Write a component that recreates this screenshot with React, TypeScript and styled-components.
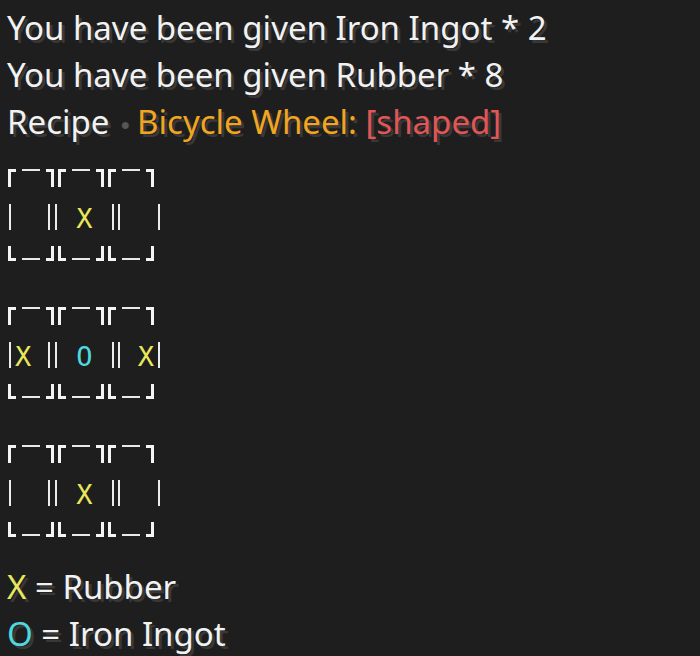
import React from "react";
import styled, { createGlobalStyle } from "styled-components";

const Global = createGlobalStyle`
  html, body { margin: 0; padding: 0; background: #1e1e1e; }
  body { width: 700px; height: 656px; overflow: hidden; }
`;

const Chat = styled.div`
  display: flex;
  flex-direction: column;
  padding: 4px 0 0 7px;
  font-family: "Noto Sans", "Open Sans", sans-serif;
  font-size: 33px;
  color: #f2f2f2;
  text-shadow: 3px 3px 0 #383838;
`;

const Line = styled.div`
  height: 47px;
  line-height: 47px;
  white-space: pre;
`;

const Tone = styled.span<{ $c: string }>`
  color: ${(p) => p.$c};
`;

const Dot = styled.span`
  color: #565656;
  font-size: 16px;
  vertical-align: 4px;
  margin: 0 7px 0 11px;
  text-shadow: none;
`;

const Grid = styled.div<{ $first?: boolean }>`
  display: flex;
  flex-direction: column;
  height: 92px;
  margin-top: ${(p) => (p.$first ? "24px" : "46px")};
  margin-left: 1px;
  text-shadow: none;
`;

const EdgeRow = styled.div<{ $bottom?: boolean }>`
  display: flex;
  gap: 4px;
  height: ${(p) => (p.$bottom ? "15px" : "18px")};
  margin-top: ${(p) => (p.$bottom ? "16px" : "0")};
`;

const EdgeCell = styled.div<{ $bottom?: boolean }>`
  display: flex;
  width: 46px;
  height: 100%;
  align-items: ${(p) => (p.$bottom ? "flex-end" : "flex-start")};
`;

const Corner = styled.div<{ $bottom?: boolean; $right?: boolean }>`
  width: 8px;
  height: 100%;
  box-sizing: border-box;
  border-color: #f4f4f4;
  border-style: solid;
  border-width: 0;
  ${(p) => (p.$bottom ? "border-bottom-width: 3px;" : "border-top-width: 3px;")}
  ${(p) => (p.$right ? "border-right-width: 3px;" : "border-left-width: 3px;")}
`;

const Span = styled.div<{ $bottom?: boolean }>`
  flex: 1;
  height: 2px;
  margin: ${(p) => (p.$bottom ? "0 6px 1px" : "0 6px")};
  background: #e8e8e8;
`;

const MidRow = styled.div`
  display: flex;
  height: 26px;
  margin-top: 17px;
  margin-left: 1px;
`;

const MidCell = styled.div<{ $w: number; $align: string; $gap: number }>`
  display: flex;
  width: ${(p) => p.$w}px;
  margin-right: ${(p) => p.$gap}px;
  box-sizing: border-box;
  border-left: 2px solid #ececec;
  border-right: 2px solid #ececec;
  justify-content: ${(p) => p.$align};
  align-items: center;
  padding: 0 4px;
`;

const Glyph = styled.span<{ $c: string }>`
  font-family: "DejaVu Sans Mono", "Liberation Mono", monospace;
  font-size: 27px;
  line-height: 26px;
  color: ${(p) => p.$c};
  margin-top: 4px;
`;

const Legend = styled(Line)<{ $top?: boolean }>`
  margin-top: ${(p) => (p.$top ? "26px" : "0")};
`;

const YELLOW = "#e8e85c";
const CYAN = "#4fd8de";

type Slot = "" | "X" | "O";

const colorOf = (s: Slot) => (s === "X" ? YELLOW : CYAN);

function Edge({ bottom }: { bottom?: boolean }) {
  return (
    <EdgeRow $bottom={bottom}>
      {[0, 1, 2].map((i) => (
        <EdgeCell key={i} $bottom={bottom}>
          <Corner $bottom={bottom} />
          <Span $bottom={bottom} />
          <Corner $bottom={bottom} $right />
        </EdgeCell>
      ))}
    </EdgeRow>
  );
}

const midCells = [
  { w: 41, align: "flex-start", gap: 5 },
  { w: 59, align: "center", gap: 4 },
  { w: 42, align: "flex-end", gap: 0 },
];

function CraftGrid({ row, first }: { row: Slot[]; first?: boolean }) {
  return (
    <Grid $first={first}>
      <Edge />
      <MidRow>
        {midCells.map((c, i) => (
          <MidCell key={i} $w={c.w} $align={c.align} $gap={c.gap}>
            {row[i] ? <Glyph $c={colorOf(row[i])}>{row[i]}</Glyph> : null}
          </MidCell>
        ))}
      </MidRow>
      <Edge bottom />
    </Grid>
  );
}

export default function App() {
  return (
    <>
      <Global />
      <Chat>
        <Line>You have been given Iron Ingot * 2</Line>
        <Line>You have been given Rubber * 8</Line>
        <Line>
          Recipe<Dot>●</Dot>
          <Tone $c="#f2a51e">Bicycle Wheel: </Tone>
          <Tone $c="#e35656">[shaped]</Tone>
        </Line>
        <CraftGrid first row={["", "X", ""]} />
        <CraftGrid row={["X", "O", "X"]} />
        <CraftGrid row={["", "X", ""]} />
        <Legend $top>
          <Tone $c={YELLOW}>X</Tone> = Rubber
        </Legend>
        <Legend>
          <Tone $c={CYAN}>O</Tone> = Iron Ingot
        </Legend>
      </Chat>
    </>
  );
}
